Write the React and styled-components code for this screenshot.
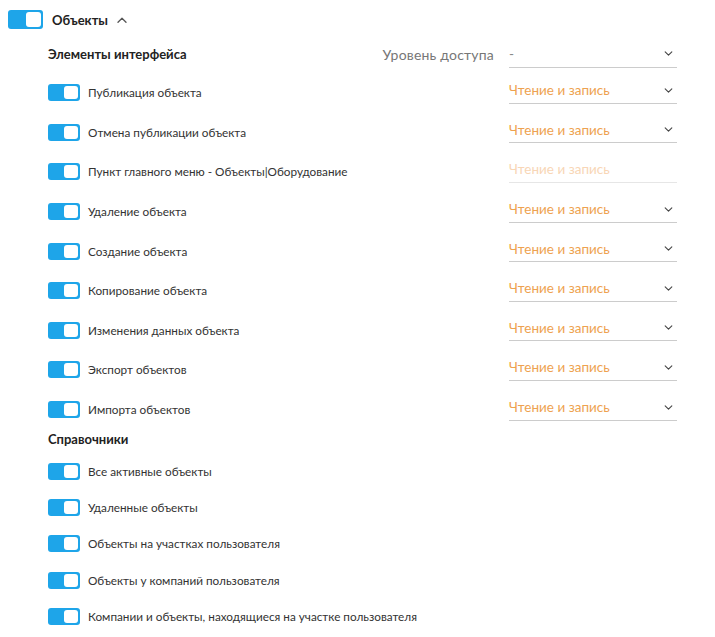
import React from "react";
import styled, { createGlobalStyle } from "styled-components";

const GlobalStyle = createGlobalStyle`
  body {
    margin: 0;
    background: #ffffff;
    font-family: "Lato", "Open Sans", sans-serif;
    color: #333333;
  }
`;

const Page = styled.div`
  padding: 10px 0 0 8px;
  width: 715px;
  box-sizing: border-box;
`;

const Header = styled.div`
  display: flex;
  align-items: center;
  height: 19px;
  gap: 9px;
`;

const Title = styled.span`
  font-size: 13px;
  font-weight: 700;
  color: #222;
`;

const Toggle = styled.div`
  position: relative;
  width: ${(p) => (p.big ? "35px" : "32px")};
  height: ${(p) => (p.big ? "19px" : "17px")};
  background: #1ea5e9;
  border-radius: 3px;
  flex-shrink: 0;

  &::after {
    content: "";
    position: absolute;
    top: 2px;
    right: 2px;
    bottom: 2px;
    width: ${(p) => (p.big ? "15px" : "14px")};
    background: #ffffff;
    border-radius: 3px;
  }
`;

const Body = styled.div`
  margin: 11px 0 0 40px;
  width: 629px;
`;

const SubHeader = styled.div`
  display: flex;
  align-items: flex-start;
  height: 30px;
  margin-bottom: 3px;
`;

const SectionTitle = styled.div`
  flex: 1;
  font-size: 13px;
  font-weight: 700;
  color: #222;
  height: ${(p) => (p.h ? p.h : "28px")};
  display: flex;
  align-items: center;
`;

const AccessLabel = styled.div`
  font-size: 14px;
  color: #777;
  height: 28px;
  display: flex;
  align-items: center;
  margin-right: 15px;
  letter-spacing: 0.2px;
`;

const Select = styled.div`
  width: 168px;
  height: ${(p) => (p.h ? p.h : "26px")};
  box-sizing: border-box;
  border-bottom: 1px solid ${(p) => (p.disabled ? "#e6e6e6" : "#cccccc")};
  display: flex;
  align-items: center;
  justify-content: space-between;
  padding-right: 4px;
  font-size: 13.5px;
  color: ${(p) => (p.muted ? "#888" : p.disabled ? "#f8d6b6" : "#eea24f")};
  margin-bottom: ${(p) => (p.shift ? "4px" : "0")};
`;

const Row = styled.div`
  display: flex;
  align-items: center;
  height: ${(p) => p.h};
`;

const Label = styled.div`
  flex: 1;
  display: flex;
  align-items: center;
  gap: 8px;
  font-size: 11.75px;
  color: #333;
`;

const Spacer = styled.div`
  height: 4px;
`;

const Chevron = ({ up }) => (
  <svg width={up ? 10 : 9} height={up ? 6 : 5} viewBox="0 0 10 6" fill="none">
    <path
      d={up ? "M1 5.2 L5 1.2 L9 5.2" : "M1 1 L5 5 L9 1"}
      stroke={up ? "#555" : "#444"}
      strokeWidth="1.3"
      strokeLinecap="round"
      strokeLinejoin="round"
    />
  </svg>
);

const items = [
  { name: "Публикация объекта" },
  { name: "Отмена публикации объекта" },
  { name: "Пункт главного меню - Объекты|Оборудование", disabled: true },
  { name: "Удаление объекта" },
  { name: "Создание объекта" },
  { name: "Копирование объекта" },
  { name: "Изменения данных объекта" },
  { name: "Экспорт объектов" },
  { name: "Импорта объектов" },
];

const refs = [
  "Все активные объекты",
  "Удаленные объекты",
  "Объекты на участках пользователя",
  "Объекты у компаний пользователя",
  "Компании и объекты, находящиеся на участке пользователя",
];

export default function App() {
  return (
    <Page>
      <GlobalStyle />
      <Header>
        <Toggle big />
        <Title>Объекты</Title>
        <Chevron up />
      </Header>
      <Body>
        <SubHeader>
          <SectionTitle>Элементы интерфейса</SectionTitle>
          <AccessLabel>Уровень доступа</AccessLabel>
          <Select muted h="28px">
            <span>-</span>
            <Chevron />
          </Select>
        </SubHeader>
        {items.map((it) => (
          <Row key={it.name} h="39.6px">
            <Label>
              <Toggle />
              {it.name}
            </Label>
            <Select shift disabled={it.disabled}>
              <span>Чтение и запись</span>
              {!it.disabled && <Chevron />}
            </Select>
          </Row>
        ))}
        <SectionTitle h="20px">Справочники</SectionTitle>
        <Spacer />
        {refs.map((r) => (
          <Row key={r} h="36.25px">
            <Label>
              <Toggle />
              {r}
            </Label>
          </Row>
        ))}
      </Body>
    </Page>
  );
}
